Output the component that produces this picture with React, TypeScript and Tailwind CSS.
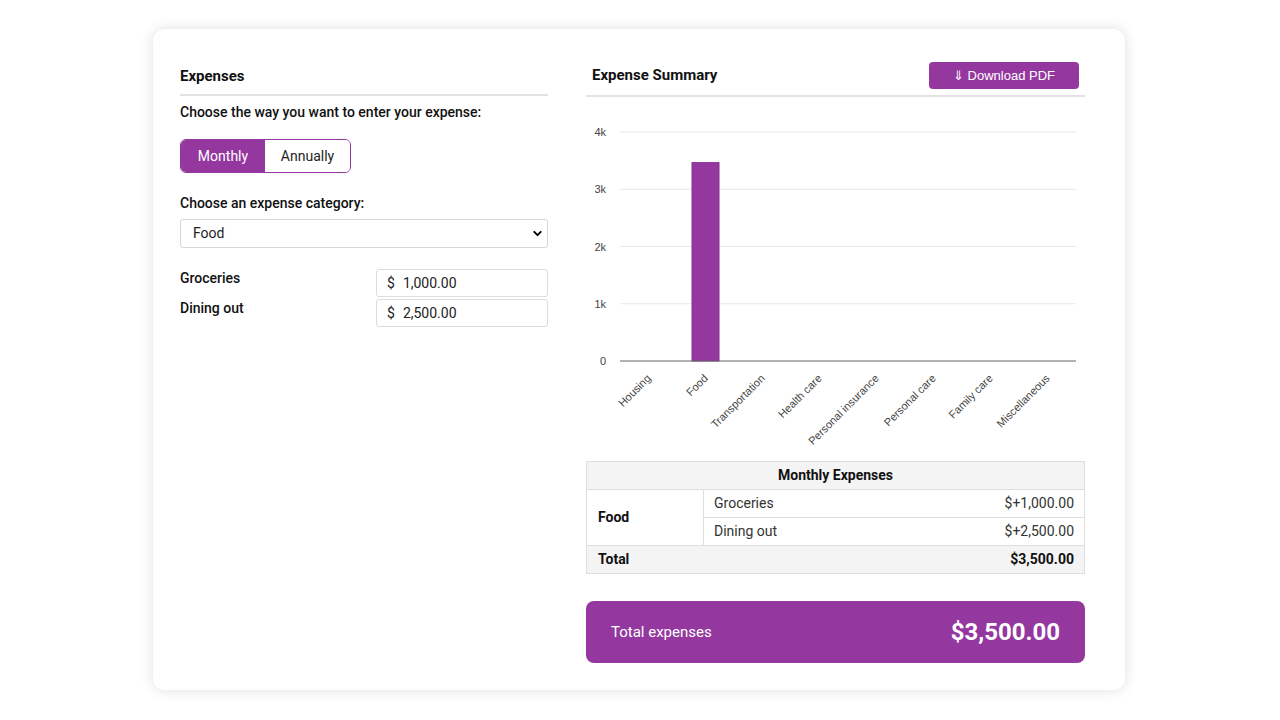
import React from 'react';
import { FiChevronDown } from 'react-icons/fi';

const categories = [
  'Housing',
  'Food',
  'Transportation',
  'Health care',
  'Personal insurance',
  'Personal care',
  'Family care',
  'Miscellaneous',
];

const values = [0, 3500, 0, 0, 0, 0, 0, 0];

function Chart() {
  // plot area inside the svg
  const left = 34;
  const right = 490;
  const zeroY = 264;
  const stepY = 57.25;
  const slot = (right - left) / categories.length;

  return (
    <svg width="499" height="364" className="block">
      {[0, 1, 2, 3, 4].map((k) => {
        const y = zeroY - k * stepY;
        return (
          <g key={k}>
            {k > 0 && <line x1={left} x2={right} y1={y} y2={y} stroke="#e6e6e6" strokeWidth="1" />}
            <text x={20} y={y + 4} textAnchor="end" fontSize="11" fill="#444" fontFamily="Liberation Sans, Arial, sans-serif">
              {k === 0 ? '0' : `${k}k`}
            </text>
          </g>
        );
      })}
      {values.map((v, i) => {
        if (!v) return null;
        const h = (v / 1000) * stepY - 2;
        const cx = left + slot * i + slot / 2;
        return <rect key={i} x={cx - 13.5} y={zeroY - h} width="27" height={h} fill="#9438a0" stroke="#85308f" strokeWidth="1" />;
      })}
      <line x1={left} x2={right} y1={zeroY} y2={zeroY} stroke="#666" strokeWidth="1" />
      {categories.map((c, i) => {
        const cx = left + slot * i + slot / 2 + 3;
        return (
          <text
            key={c}
            x={cx}
            y={zeroY + 18}
            textAnchor="end"
            fontSize="11"
            fill="#444"
            fontFamily="Liberation Sans, Arial, sans-serif"
            transform={`rotate(-45 ${cx} ${zeroY + 18})`}
          >
            {c}
          </text>
        );
      })}
    </svg>
  );
}

export default function App() {
  return (
    <div className="min-h-[720px] bg-white flex pl-[153px] pt-[29px] font-['Roboto',sans-serif] text-[#111]">
      <div className="w-[972px] h-[661px] bg-white rounded-[12px] shadow-[0_0_14px_rgba(0,0,0,0.13)] flex pt-[28px] pl-[27px] pr-[40px] gap-[38px]">
        {/* Left column */}
        <div className="w-[368px] flex flex-col">
          <div className="h-[39px] flex items-center border-b-2 border-[#e3e3e3]">
            <h2 className="text-[15px] font-bold mt-[2px]">Expenses</h2>
          </div>
          <p className="mt-[6px] text-[14px] leading-5 font-medium">Choose the way you want to enter your expense:</p>
          <div className="mt-[17px] flex w-[171px] h-[34px] border border-[#9438a0] rounded-[6px] overflow-hidden text-[14px]">
            <button className="w-[84px] bg-[#9438a0] text-white">Monthly</button>
            <button className="flex-1 bg-white text-[#222]">Annually</button>
          </div>
          <p className="mt-[20px] text-[14px] leading-5 font-medium">Choose an expense category:</p>
          <div className="mt-[6px] h-[29px] border border-[#d6d6d6] rounded-[3px] flex items-center justify-between pl-[12px] pr-[3px] text-[14px] text-[#222]">
            <span>Food</span>
            <FiChevronDown className="text-[13px] text-black" strokeWidth={3.5} />
          </div>
          <div className="mt-[21px] flex flex-col gap-[2px]">
            {[
              ['Groceries', '1,000.00'],
              ['Dining out', '2,500.00'],
            ].map(([label, val]) => (
              <div key={label} className="flex justify-between items-start">
                <span className="text-[14px] leading-5 font-medium -mt-[1px]">{label}</span>
                <div className="w-[172px] h-[28px] border border-[#dcdcdc] rounded-[3px] flex items-center pl-[10px] text-[14px] text-[#222]">
                  <span>$</span>
                  <span className="ml-[8px]">{val}</span>
                </div>
              </div>
            ))}
          </div>
        </div>

        {/* Right column */}
        <div className="w-[499px] flex flex-col">
          <div className="h-[40px] flex items-center justify-between border-b-2 border-[#e3e3e3] pl-[6px] pr-[6px]">
            <h2 className="text-[15px] font-bold -mt-[1px]">Expense Summary</h2>
            <button className="w-[150px] h-[27px] bg-[#9438a0] text-white rounded-[4px] text-[13px] font-['Liberation_Sans',Arial,sans-serif] -mt-[1px]">
              ⇓ Download PDF
            </button>
          </div>
          <Chart />
          <table className="w-full border-collapse border border-[#dedede] text-[14px]">
            <thead>
              <tr className="bg-[#f4f4f4] h-[28px]">
                <th colSpan={3} className="font-bold text-center">Monthly Expenses</th>
              </tr>
            </thead>
            <tbody>
              <tr className="h-[28px] border-t border-[#dedede]">
                <td rowSpan={2} className="w-[117px] pl-[11px] font-bold border-r border-[#dedede]">Food</td>
                <td className="pl-[10px] text-[#333]">Groceries</td>
                <td className="pr-[10px] text-right text-[#333]">$+1,000.00</td>
              </tr>
              <tr className="h-[28px] border-t border-[#dedede]">
                <td className="pl-[10px] text-[#333]">Dining out</td>
                <td className="pr-[10px] text-right text-[#333]">$+2,500.00</td>
              </tr>
              <tr className="h-[28px] bg-[#f4f4f4] border-t border-[#dedede]">
                <td className="pl-[11px] font-bold">Total</td>
                <td colSpan={2} className="pr-[10px] text-right font-bold">$3,500.00</td>
              </tr>
            </tbody>
          </table>
          <div className="mt-[27px] h-[62px] rounded-[8px] bg-[#9438a0] text-white flex items-center justify-between px-[25px]">
            <span className="text-[15px]">Total expenses</span>
            <span className="text-[24px] font-bold">$3,500.00</span>
          </div>
        </div>
      </div>
    </div>
  );
}
